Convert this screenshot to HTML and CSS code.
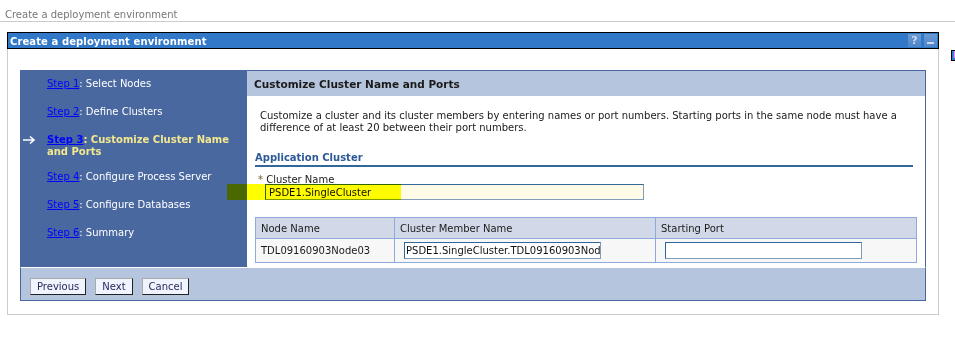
FILE: index.html
```html
<!DOCTYPE html>
<html>
<head>
<meta charset="utf-8">
<link rel="stylesheet" href="styles.css">
</head>
<body>
<div class="crumb">Create a deployment environment</div>
<div class="portlet">
  <div class="titlebar">
    <span class="title">Create a deployment environment</span>
    <span class="tb-icons">
      <span class="tb-btn">?</span>
      <span class="tb-btn tb-min"></span>
    </span>
  </div>
  <div class="pbody">
    <div class="wizard">
      <div class="wiz-main">
        <ul class="steps">
          <li class="step"><a href="#">Step 1</a>: Select Nodes</li>
          <li class="step"><a href="#">Step 2</a>: Define Clusters</li>
          <li class="step current"><svg class="arrow" width="14" height="10" viewBox="0 0 14 10"><path d="M1 5 H12 M8 1.5 L12 5 L8 8.5" fill="none" stroke="#ffffff" stroke-width="1.6"/></svg><a href="#">Step 3</a>: Customize Cluster Name and Ports</li>
          <li class="step"><a href="#">Step 4</a>: Configure Process Server</li>
          <li class="step"><a href="#">Step 5</a>: Configure Databases</li>
          <li class="step"><a href="#">Step 6</a>: Summary</li>
        </ul>
        <div class="content">
          <div class="content-head">Customize Cluster Name and Ports</div>
          <div class="content-body">
            <p class="desc">Customize a cluster and its cluster members by entering names or port numbers. Starting ports in the same node must have a difference of at least 20 between their port numbers.</p>
            <div class="section">Application Cluster</div>
            <div class="field-label"><span class="req">*</span> Cluster Name</div>
            <div class="cluster-input">PSDE1.SingleCluster</div>
            <table class="members">
              <tr>
                <th class="c1">Node Name</th>
                <th class="c2">Cluster Member Name</th>
                <th class="c3">Starting Port</th>
              </tr>
              <tr>
                <td>TDL09160903Node03</td>
                <td><div class="tinput">PSDE1.SingleCluster.TDL09160903Nod</div></td>
                <td><div class="tinput"></div></td>
              </tr>
            </table>
          </div>
        </div>
      </div>
      <div class="wiz-foot">
        <button class="btn">Previous</button>
        <button class="btn">Next</button>
        <button class="btn">Cancel</button>
      </div>
    </div>
  </div>
</div>
<div class="highlight"></div>
<div class="edge-box">H</div>
</body>
</html>
```

FILE: styles.css
```css
html, body {
  margin: 0;
  padding: 0;
  background: #ffffff;
}
body {
  font-family: "DejaVu Sans", Verdana, sans-serif;
  font-size: 10px;
  color: #1a1a1a;
  position: relative;
  width: 955px;
  height: 345px;
  overflow: hidden;
}
.crumb {
  height: 21px;
  line-height: 29px;
  padding-left: 5px;
  color: #777777;
  border-bottom: 1px solid #cccccc;
}
.portlet {
  margin-left: 7px;
  margin-top: 10px;
  width: 932px;
}
.titlebar {
  height: 15px;
  border: 1px solid #000000;
  background: #3278c8;
  display: flex;
  align-items: center;
  justify-content: space-between;
}
.title {
  color: #ffffff;
  font-weight: bold;
  padding-left: 2px;
  padding-top: 1px;
  letter-spacing: 0.1px;
}
.tb-icons {
  display: flex;
  gap: 3px;
  padding-right: 1px;
}
.tb-btn {
  width: 13px;
  height: 13px;
  background: linear-gradient(#6b9ad4, #4c85c9);
  color: #c8d8ee;
  font-weight: bold;
  font-size: 11px;
  line-height: 13px;
  text-align: center;
  position: relative;
}
.tb-min::after {
  content: "";
  position: absolute;
  left: 3px;
  right: 3px;
  bottom: 3px;
  height: 2px;
  background: #c8d8ee;
}
.pbody {
  border-left: 1px solid #cccccc;
  border-right: 1px solid #cccccc;
  border-bottom: 1px solid #cccccc;
  padding: 21px 12px 13px 12px;
}
.wizard {
  width: 906px;
}
.wiz-main {
  display: flex;
  height: 197px;
}
.steps {
  list-style: none;
  margin: 0;
  padding: 8px 0 0 27px;
  width: 200px;
  background: #4a68a0;
  color: #ffffff;
  flex: none;
}
.step {
  line-height: 12px;
  margin-bottom: 16px;
  position: relative;
}
.step a {
  color: #0000ff;
  text-decoration: underline;
  font-weight: normal;
}
.step.current {
  margin-top: 1px;
  margin-bottom: 13px;
  color: #f3e88f;
  font-weight: bold;
}
.step.current a {
  font-weight: bold;
}
.arrow {
  position: absolute;
  left: -25px;
  top: 1px;
}
.content {
  flex: 1;
  min-width: 0;
  border-top: 1px solid #4a68a0;
  border-right: 1px solid #4a68a0;
  background: #ffffff;
}
.content-head {
  height: 25px;
  line-height: 26px;
  background: #b5c5dd;
  padding-left: 7px;
  font-weight: bold;
  font-size: 10.5px;
}
.content-body {
  padding: 0 0 0 8px;
}
.desc {
  margin: 14px 0 0 5px;
  padding-right: 12px;
  line-height: 12px;
}
.section {
  margin-top: 18px;
  margin-right: 12px;
  color: #2c5a94;
  font-weight: bold;
  line-height: 12px;
  padding-bottom: 1px;
  border-bottom: 2px solid #336699;
}
.field-label {
  margin-top: 8px;
  padding-left: 3px;
  line-height: 10px;
}
.req {
  color: #6b5a1e;
}
.cluster-input {
  margin: -1px 0 0 10px;
  width: 374px;
  height: 14px;
  line-height: 15px;
  padding-left: 3px;
  border: 1px solid #7f9db9;
  border-top-color: #336699;
  border-left-color: #336699;
  background: #fffbe6;
  color: #111111;
}
.members {
  margin-top: 17px;
  border-collapse: collapse;
  width: 662px;
  border: 1px solid #8eaad8;
}
.members th {
  background: #d1d9e8;
  font-weight: normal;
  text-align: left;
  height: 20px;
  padding: 0 0 0 5px;
  border: 1px solid #8eaad8;
}
.members td {
  background: #f7f7f7;
  height: 23px;
  padding: 0 0 0 5px;
  border: 1px solid #8eaad8;
}
.c1 { width: 133px; }
.c2 { width: 255px; }
.tinput {
  margin-left: 4px;
  width: 194px;
  height: 15px;
  line-height: 16px;
  padding-left: 1px;
  border: 1px solid #336699;
  border-right-color: #7f9db9;
  border-bottom-color: #7f9db9;
  background: #ffffff;
  color: #111111;
  white-space: nowrap;
  overflow: hidden;
}
.wiz-foot {
  height: 32px;
  box-sizing: content-box;
  background: #b5c5dd;
  border-top: 1px solid #ffffff;
  border-left: 1px solid #4a68a0;
  border-right: 1px solid #4a68a0;
  border-bottom: 1px solid #4a68a0;
  display: flex;
  align-items: flex-start;
  gap: 9px;
  padding-left: 9px;
}
.btn {
  font-family: "DejaVu Sans", Verdana, sans-serif;
  font-size: 10px;
  color: #2a2a5a;
  background: #f0f4ff;
  border: 1px solid;
  border-color: #aaaaaa #222222 #222222 #aaaaaa;
  height: 17px;
  padding: 0 6px;
  margin: 10px 0 0 0;
  line-height: 15px;
}
.highlight {
  position: absolute;
  left: 227px;
  top: 184px;
  width: 174px;
  height: 16px;
  background: #ffff00;
  mix-blend-mode: multiply;
}
.edge-box {
  position: absolute;
  left: 951px;
  top: 50px;
  width: 10px;
  height: 9px;
  border: 1px solid #000000;
  background: #3278c8;
  color: #ff88ff;
  font-size: 8px;
  font-weight: bold;
  line-height: 9px;
  padding-left: 1px;
}
```
